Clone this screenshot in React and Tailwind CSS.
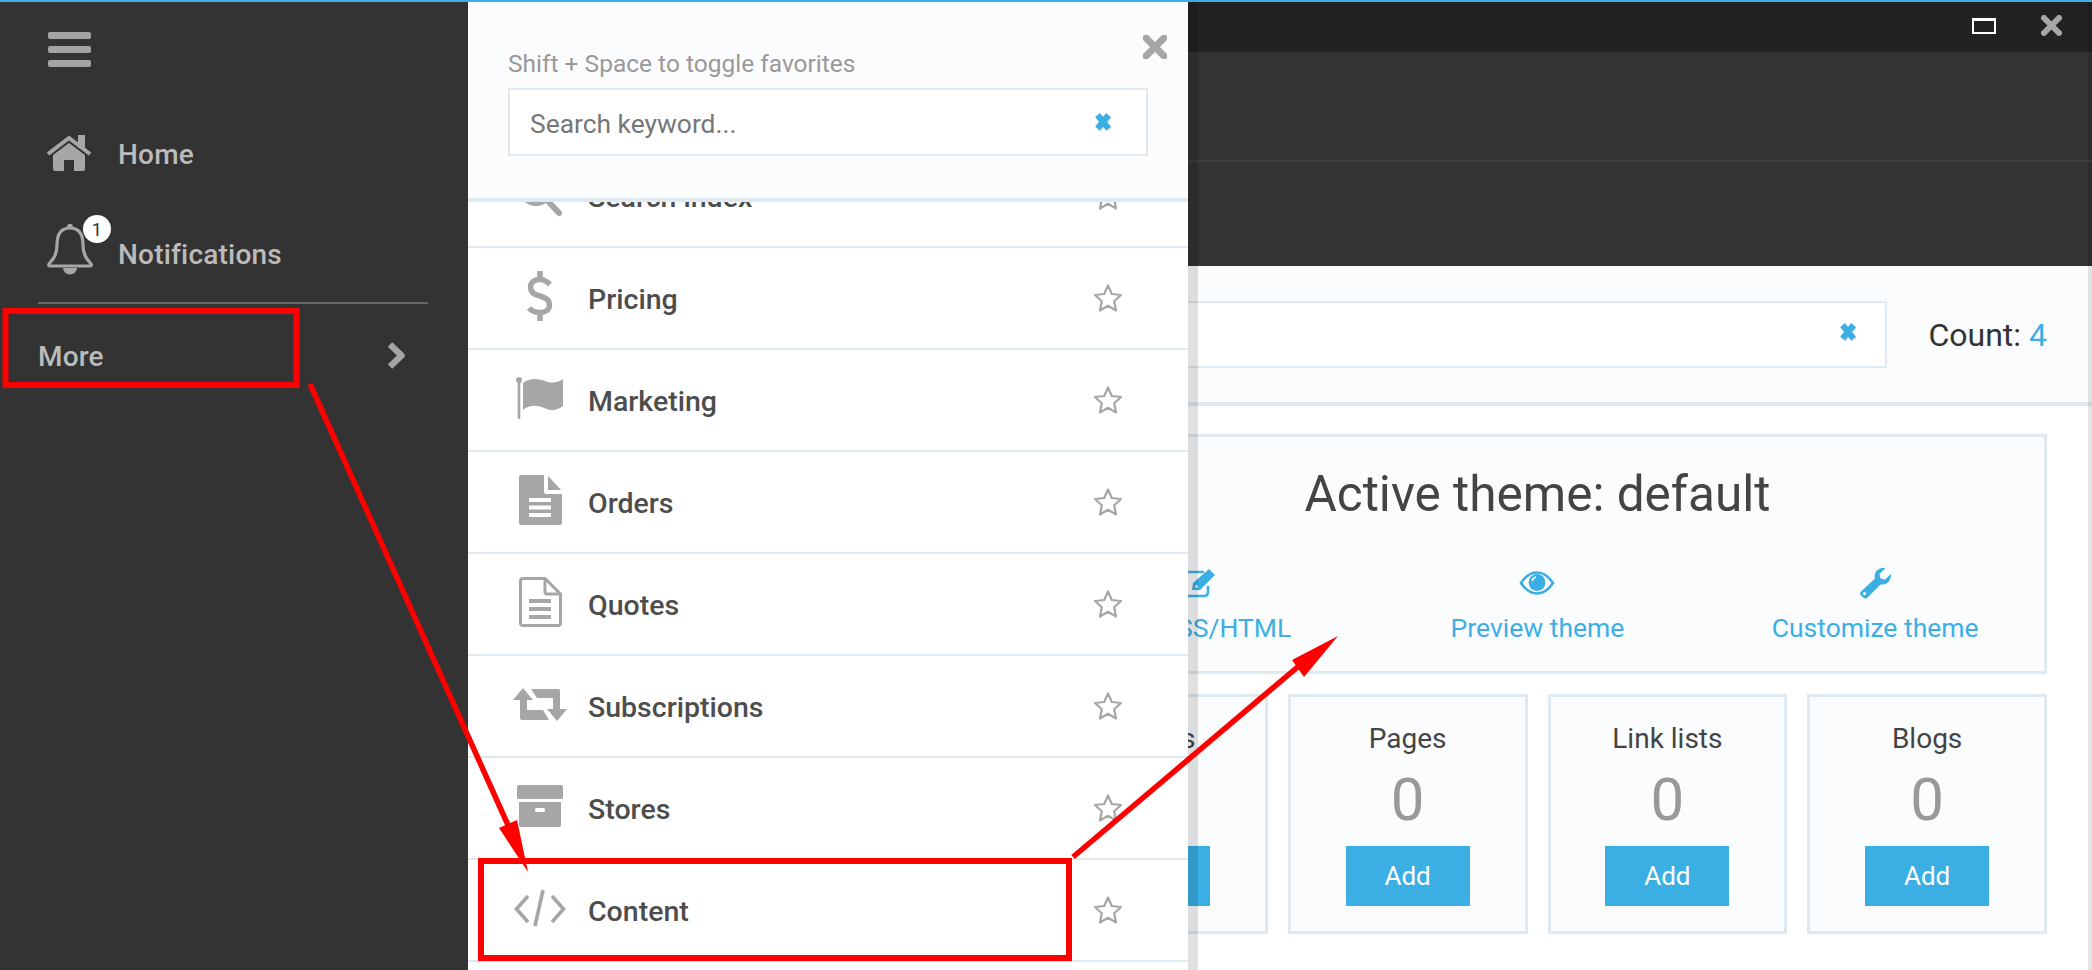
import React from "react";

const G = "#a6a6a6";
const B = "#3bafe4";

const Ico = ({ w, h, children, className = "" }) => (
  <svg width={w} height={h} viewBox={`0 0 ${w} ${h}`} className={`shrink-0 ${className}`}>{children}</svg>
);

const XIcon = ({ s = 22, c = G, w = 6 }) => (
  <Ico w={s} h={s}>
    <path d={`M3 3 L${s - 3} ${s - 3} M${s - 3} 3 L3 ${s - 3}`} stroke={c} strokeWidth={w} strokeLinecap="round" fill="none" />
  </Ico>
);

const BlueX = () => (
  <Ico w={21} h={21}>
    <path d="M4.5 3 L15.5 16.5 M15.5 3 L4.5 16.5" stroke="#d5d8da" strokeWidth="6" transform="translate(1 1.2)" fill="none" />
    <path d="M4.5 3 L15.5 16.5 M15.5 3 L4.5 16.5" stroke={B} strokeWidth="6" fill="none" />
  </Ico>
);

const Home = () => (
  <Ico w={46} h={38}>
    <rect x="32" y="1" width="7" height="13" fill={G} />
    <path d="M2 20 L23 4 L44 20" stroke={G} strokeWidth="4" fill="none" />
    <path d="M7 21 L23 9 L39 21 V35 Q39 37 37 37 H28 V26 H18 V37 H9 Q7 37 7 35 Z" fill={G} />
  </Ico>
);

const Bell = () => (
  <Ico w={48} h={52}>
    <circle cx="24" cy="3.5" r="2.8" fill={G} />
    <path d="M24 5 C13 5 11 14 11 22 C11 33 6 37 3 41 Q2 43 4 43 L44 43 Q46 43 45 41 C42 37 37 33 37 22 C37 14 35 5 24 5 Z" stroke={G} strokeWidth="3.2" fill="none" />
    <path d="M17 45 A7 6.5 0 0 0 31 45 Z" fill={G} />
  </Ico>
);

const SearchI = () => (
  <Ico w={48} h={50}>
    <circle cx="20" cy="20" r="14" stroke={G} strokeWidth="6" fill="none" />
    <path d="M31 31 L43 44" stroke={G} strokeWidth="6" strokeLinecap="round" />
  </Ico>
);

const Dollar = () => (
  <Ico w={28} h={50}>
    <path d="M24 13.5 C20 9.5 17 8.5 14 8.5 C7.5 8.5 4.5 12 4.5 16 C4.5 22 9 24 14 25 C19.5 26.5 23.5 29 23.5 34 C23.5 39 19.5 41.5 14 41.5 C9.5 41.5 5.5 40 3 37" stroke={G} strokeWidth="5.5" fill="none" />
    <path d="M14 0 V8 M14 42 V50" stroke={G} strokeWidth="5.5" />
  </Ico>
);

const Flag = () => (
  <Ico w={48} h={44}>
    <circle cx="3" cy="4" r="3" fill={G} />
    <rect x="1.7" y="4" width="2.6" height="39" rx="1" fill={G} />
    <path d="M7 7 C14 1 24 3 29 5 C35 7.5 42 7 47 3 V30 C41 35 34 35 28 32 C22 29.5 14 28 7 34 Z" fill={G} />
  </Ico>
);

const Orders = () => (
  <Ico w={43} h={50}>
    <path d="M2.5 0 H25 V17 Q25 19 27 19 H43 V47.5 Q43 50 40.5 50 H2.5 Q0 50 0 47.5 V2.5 Q0 0 2.5 0 Z" fill={G} />
    <path d="M29 1 L42 15 H29 Z" fill={G} />
    <rect x="10" y="23" width="22" height="4" fill="#fff" />
    <rect x="10" y="30.5" width="22" height="4" fill="#fff" />
    <rect x="10" y="38" width="22" height="4" fill="#fff" />
  </Ico>
);

const Quotes = () => (
  <Ico w={43} h={50}>
    <path d="M4 1.5 H26 L41.5 17 V46 Q41.5 48.5 39 48.5 H4 Q1.5 48.5 1.5 46 V4 Q1.5 1.5 4 1.5 Z" stroke={G} strokeWidth="3" fill="#fff" />
    <path d="M26 2 V15 Q26 17 28 17 H41" stroke={G} strokeWidth="3" fill="none" />
    <rect x="10" y="22" width="22" height="4" fill={G} />
    <rect x="10" y="30" width="22" height="4" fill={G} />
    <rect x="10" y="38" width="22" height="4" fill={G} />
  </Ico>
);

const Retweet = () => (
  <Ico w={54} h={33}>
    <path d="M10 0 L20 12 H14 V22 H30 L36 32 H9 Q7 32 7 30 V12 H0 Z" fill={G} />
    <path d="M44 33 L54 21 H47 V3 Q47 1 45 1 H18 L24 10 H40 V21 H34 Z" fill={G} />
  </Ico>
);

const Archive = () => (
  <Ico w={46} h={42}>
    <rect x="0" y="0" width="46" height="14" rx="1.5" fill={G} />
    <path d="M2 17 H44 V40 Q44 42 42 42 H4 Q2 42 2 40 Z" fill={G} />
    <rect x="18" y="23" width="10" height="4" rx="1.5" fill="#fff" />
  </Ico>
);

const Code = () => (
  <Ico w={52} h={38}>
    <path d="M14 7 L2.5 20 L14 33 M38 7 L49.5 20 L38 33 M29 1 L21 37" stroke={G} strokeWidth="3.6" fill="none" />
  </Ico>
);

const Star = () => (
  <Ico w={30} h={29} className="-mt-[2px] ml-auto">
    <path d="M15 2.5 L18.8 11 L28 12 L21.2 18.3 L23 27.5 L15 22.8 L7 27.5 L8.8 18.3 L2 12 L11.2 11 Z" stroke={G} strokeWidth="2.2" fill="none" strokeLinejoin="round" />
  </Ico>
);

const EditI = () => (
  <Ico w={36} h={30}>
    <path d="M22 4 H6 Q2 4 2 8 V24 Q2 28 6 28 H22 Q26 28 26 24 V18" stroke={B} strokeWidth="2.6" fill="none" />
    <path d="M10 22 L11 15 L27 1 L33 7 L18 22 Z" fill={B} />
    <path d="M13 20 L14 16.5 L16.5 19 Z" fill="#fff" />
  </Ico>
);

const Eye = () => (
  <Ico w={36} h={24}>
    <path d="M2 12 C8 3 13 1.5 18 1.5 C23 1.5 28 3 34 12 C28 21 23 22.5 18 22.5 C13 22.5 8 21 2 12 Z" stroke={B} strokeWidth="2.6" fill="none" />
    <circle cx="18" cy="11.5" r="8.4" fill={B} />
    <path d="M13 10 A5.5 5.5 0 0 1 17 6" stroke="#fff" strokeWidth="1.5" fill="none" />
  </Ico>
);

const Wrench = () => (
  <Ico w={33} h={32}>
    <path d="M1.5 25 L16 11.5 C14.5 6 18.5 0.8 25 0.8 L26.5 1 L20.5 7 L21.5 11.5 L26 12.5 L32 7 C32.5 13 28 18.5 21.5 17.5 L8 31 Q6 32 4.5 30.7 L1.5 28 Q0.5 26.5 1.5 25 Z" fill={B} />
    <circle cx="5.5" cy="26.5" r="1.6" fill="#fff" />
  </Ico>
);

const rows = [
  ["Search index", <SearchI key="a" />],
  ["Pricing", <Dollar key="b" />],
  ["Marketing", <Flag key="c" />],
  ["Orders", <Orders key="d" />],
  ["Quotes", <Quotes key="e" />],
  ["Subscriptions", <Retweet key="f" />],
  ["Stores", <Archive key="g" />],
  ["Content", <Code key="h" />],
];

const cards = ["Articles", "Pages", "Link lists", "Blogs"];

const Inp = ({ className = "", children }) => (
  <div className={`flex items-center border-2 border-[#e0e9ef] bg-white ${className}`}>{children}</div>
);

export default function App() {
  return (
    <div
      className="relative flex h-[970px] w-[2092px] overflow-hidden border-t-2 border-[#3bafe4] bg-white"
      style={{ fontFamily: '"Roboto", "Noto Sans", sans-serif' }}
    >
      {/* sidebar */}
      <aside className="flex w-[468px] shrink-0 flex-col bg-[#333] text-[28px] font-medium tracking-[0.2px] text-[#bbb]">
        <div className="flex h-[102px] flex-col gap-[7px] pl-[48px] pt-[30px]">
          <span className="h-[7px] w-[43px] rounded-[2px] bg-[#a4a4a4]" />
          <span className="h-[7px] w-[43px] rounded-[2px] bg-[#a4a4a4]" />
          <span className="h-[7px] w-[43px] rounded-[2px] bg-[#a4a4a4]" />
        </div>
        <div className="flex h-[100px] items-center gap-[26px] pl-[46px]">
          <span className="-mt-[2px]"><Home /></span>
          <span className="mt-[1px]">Home</span>
        </div>
        <div className="relative ml-[38px] mr-[40px] flex h-[100px] items-center gap-[24px] border-b-2 border-[#666] pl-[8px]">
          <span className="relative -mt-[8px]">
            <Bell />
            <span className="absolute -right-[17px] -top-[8px] flex h-[28px] w-[28px] items-center justify-center rounded-full bg-white text-[18px] font-normal text-[#333]">1</span>
          </span>
          <span className="mt-[4px]">Notifications</span>
        </div>
        <div className="flex h-[102px] items-center justify-between pl-[38px] pr-[62px]">
          <span className="mt-[4px]">More</span>
          <Ico w={20} h={29}>
            <path d="M4 3.5 L15.5 14.5 L4 25.5" stroke="#a4a4a4" strokeWidth="6.5" fill="none" strokeLinejoin="round" />
          </Ico>
        </div>
      </aside>

      {/* main area, partly covered by the panel */}
      <main className="flex min-w-0 flex-1 flex-col">
        <div className="flex h-[50px] items-center justify-end gap-[45px] bg-[#222] pr-[30px]">
          <span className="-mt-[2px] h-[16px] w-[24px] border-2 border-t-[3px] border-white" />
          <span className="-mt-[4px]"><XIcon s={21} c="#a6a6a6" w={6} /></span>
        </div>
        <div className="h-[110px] border-b-2 border-[#3d3d3d] bg-[#333]" />
        <div className="h-[104px] bg-[#333]" />
        <div className="flex h-[140px] items-center gap-[41px] border-b-4 border-[#dfe9ed] bg-[#fbfcfe] pl-[520px] pr-[45px]">
          <Inp className="h-[67px] flex-1 justify-end pr-[26px]"><span className="-mt-[3px]"><BlueX /></span></Inp>
          <div className="mt-[2px] text-[32px] text-[#333]">Count: <span className="text-[#3bafe4]">4</span></div>
        </div>
        <div className="flex flex-1 flex-col gap-[20px] pl-[560px] pr-[45px] pt-[28px]">
          <section className="flex h-[240px] flex-col items-center border-[3px] border-[#e0e9ef] bg-[#fbfcfe]">
            <h1 className="mt-[27px] text-[49.5px] leading-[60px] text-[#444]">Active theme: default</h1>
            <div className="mt-[44px] grid w-full grid-cols-3 text-[26.5px] leading-[32px] text-[#3bafe4]">
              <div className="flex flex-col items-center gap-[14px]">
                <div className="flex h-[30px] items-center"><EditI /></div>
                <span>Edit CSS/HTML</span>
              </div>
              <div className="flex flex-col items-center gap-[14px]">
                <div className="flex h-[30px] items-center"><Eye /></div>
                <span>Preview theme</span>
              </div>
              <div className="flex flex-col items-center gap-[14px]">
                <div className="flex h-[30px] items-center"><Wrench /></div>
                <span>Customize theme</span>
              </div>
            </div>
          </section>
          <section className="grid grid-cols-4 gap-[20px]">
            {cards.map((c) => (
              <div key={c} className="flex h-[240px] flex-col items-center border-[3px] border-[#e0e9ef] bg-[#fbfcfe]">
                <div className="mt-[25px] text-[28px] leading-[34px] text-[#444]">{c}</div>
                <div className="mt-[11px] text-[60px] leading-[66px] text-[#999]">0</div>
                <button className="mt-[13px] h-[60px] w-[124px] bg-[#3bafe4] text-[26px] text-white">Add</button>
              </div>
            ))}
          </section>
        </div>
      </main>

      {/* right gutter */}
      <div className="absolute bottom-0 right-0 top-0 w-[4px] bg-black/10" />

      {/* favorites panel */}
      <div className="absolute bottom-0 left-[468px] top-0 flex w-[720px] flex-col bg-white shadow-[10px_0_0_rgba(0,0,0,0.12)]">
        <header className="relative z-10 h-[200px] shrink-0 border-b-4 border-[#e0e9ef] bg-[#fbfcfe] px-[40px] pt-[47px]">
          <span className="absolute right-[21px] top-[33px]"><XIcon s={24} w={7} /></span>
          <div className="text-[24.5px] leading-[30px] text-[#999]">Shift + Space to toggle favorites</div>
          <Inp className="mt-[9px] h-[68px] justify-between pl-[20px] pr-[32px] text-[26.4px] text-[#777]">
            <span className="mt-[5px]">Search keyword...</span>
            <BlueX />
          </Inp>
        </header>
        <div className="flex-1 overflow-hidden">
          <div className="-mt-[56px]">
            {rows.map(([label, icon]) => (
              <div key={label} className="flex h-[102px] items-center border-b-2 border-[#e0e9ef] pl-[42px] pr-[65px]">
                <div className="-mt-[4px] flex w-[60px] justify-center">{icon}</div>
                <span className="ml-[18px] mt-[4px] text-[28.5px] font-medium text-[#4d4d4d]">{label}</span>
                <Star />
              </div>
            ))}
          </div>
        </div>
      </div>

      {/* annotations */}
      <svg className="pointer-events-none absolute left-0 top-[-2px] z-20" width="2092" height="970" viewBox="0 0 2092 970">
        <rect x="5.5" y="311" width="291" height="74" stroke="#ff0000" strokeWidth="6" fill="none" />
        <rect x="481" y="861" width="588" height="97" stroke="#ff0000" strokeWidth="6" fill="none" />
        <path d="M310 384 L512 834" stroke="#ff0000" strokeWidth="5.5" />
        <path d="M528 872 L499 828 L517 820 Z" fill="#ff0000" />
        <path d="M1073 857 L1300 665" stroke="#ff0000" strokeWidth="5.5" />
        <path d="M1338 636 L1292 660 L1304 677 Z" fill="#ff0000" />
      </svg>
    </div>
  );
}
